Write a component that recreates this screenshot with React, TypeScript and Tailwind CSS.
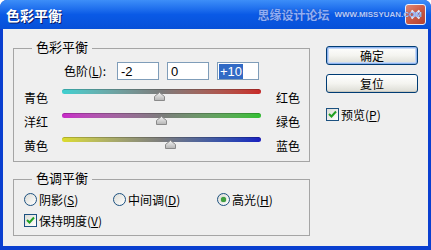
import React from "react";

const cjk = "font-['SimSun','Noto_Sans_CJK_SC',sans-serif]";

function Thumb({ left }: { left: string }) {
  return (
    <svg className={`absolute top-[2px] ${left}`} width="11" height="9" viewBox="0 0 11 9">
      <defs>
        <linearGradient id="tg" x1="0" y1="0" x2="0" y2="1">
          <stop offset="0" stopColor="#f4f4f4" />
          <stop offset="1" stopColor="#b4b4b4" />
        </linearGradient>
      </defs>
      <path d="M5.5 0.5 L10.5 4.5 L10.5 8.5 L0.5 8.5 L0.5 4.5 Z" fill="url(#tg)" stroke="#8a8a8a" />
    </svg>
  );
}

function SliderRow({ l, r, grad, left }: { l: string; r: string; grad: string; left: string }) {
  return (
    <div className="flex h-[24px] items-center">
      <span className="w-[48px] pl-[10px] pt-[5px] text-[12px] leading-none">{l}</span>
      <div className="relative h-[10px] w-[199px]">
        <div className={`absolute left-0 right-0 top-[-1px] h-[5px] rounded-full ${grad} border-t border-[#00000030]`} />
        <Thumb left={left} />
      </div>
      <span className="ml-[15px] pt-[5px] text-[12px] leading-none">{r}</span>
    </div>
  );
}

function U({ c }: { c: string }) {
  return <span className="underline underline-offset-[1px]">{c}</span>;
}

function Radio({ checked }: { checked?: boolean }) {
  return (
    <span className="relative flex h-[13px] w-[13px] items-center justify-center rounded-full border border-[#1c5180] bg-linear-to-br from-[#dcdcd6] to-white">
      {checked && <span className="h-[5px] w-[5px] rounded-full bg-[#3fa03f] shadow-[0_0_1px_#1f7a1f]" />}
    </span>
  );
}

function Check() {
  return (
    <span className="flex h-[13px] w-[13px] items-center justify-center border border-[#1c5180] bg-linear-to-br from-[#dcdcd6] to-white">
      <svg width="9" height="9" viewBox="0 0 9 9">
        <path d="M1 4 L3.5 6.5 L8 1.5" fill="none" stroke="#21a121" strokeWidth="2" />
      </svg>
    </span>
  );
}

function Button({ label, def }: { label: string; def?: boolean }) {
  return (
    <div
      className={`flex h-[19px] w-[92px] items-center justify-center rounded-[3px] border border-[#003c74] bg-linear-to-b from-white via-[#f4f4f0] to-[#dcdcd4] text-[12px] leading-none ${
        def ? "shadow-[inset_0_0_0_1px_#8fb3ef,inset_0_0_0_2px_#c5d8f5]" : "shadow-[inset_0_-1px_0_#c8c8c0]"
      }`}
    >
      {label}
    </div>
  );
}

export default function App() {
  return (
    <div className={`flex h-[250px] w-[431px] flex-col overflow-hidden rounded-t-[7px] bg-[#0a3fd0] ${cjk} text-black`}>
      {/* Title bar */}
      <div className="relative flex h-[29px] shrink-0 items-center bg-linear-to-b from-[#3d8ef8] via-[#0a5ae6] to-[#0750d8] pl-[6px] pr-[9px]">
        <span className="text-[14px] font-bold leading-none text-white [text-shadow:1px_1px_0_#0a1d6a]">色彩平衡</span>
        <div className="absolute right-[5px] top-[4px] flex h-[21px] w-[21px] items-center justify-center rounded-[3px] border border-white bg-linear-to-br from-[#f08a6a] via-[#e05a34] to-[#c8401c] opacity-90">
          <svg width="11" height="11" viewBox="0 0 11 11">
            <path d="M1.5 1.5 L9.5 9.5 M9.5 1.5 L1.5 9.5" stroke="white" strokeWidth="2.2" />
          </svg>
        </div>
        <div className="relative z-10 ml-auto flex items-center whitespace-nowrap">
          <span className="text-[12px] font-bold leading-none text-[#90aef5] [text-shadow:0_0_1px_#1a3d9a]">思缘设计论坛</span>
          <span className="ml-[5px] font-['Liberation_Sans',sans-serif] text-[8px] font-bold leading-none text-[#b4ccff] [text-shadow:0_0_1px_#1a3d9a]">WWW.MISSYUAN.COM</span>
        </div>
      </div>

      {/* Body */}
      <div className="mx-[3px] mb-[4px] flex flex-1 bg-[#efefef] pl-[10px]">
        {/* Left column */}
        <div className="mt-[19px] flex w-[297px] flex-col">
          {/* Group 1 */}
          <div className="relative h-[114px] border border-[#a5a5a5]">
            <span className="absolute left-[18px] top-[-9px] bg-[#efefef] px-[4px] text-[13px] leading-none">色彩平衡</span>
            <div className="flex h-[31px] items-end">
              <span className="ml-[50px] w-[53px] pb-[3px] text-[12px] leading-none">
                色阶(<U c="L" />):
              </span>
              <div className="flex h-[18px] w-[42px] items-center border border-[#7f9db9] bg-white pl-[3px] font-['Liberation_Sans',sans-serif] text-[13px] leading-none">-2</div>
              <div className="ml-[8px] flex h-[18px] w-[42px] items-center border border-[#7f9db9] bg-white pl-[3px] font-['Liberation_Sans',sans-serif] text-[13px] leading-none">0</div>
              <div className="ml-[8px] flex h-[18px] w-[42px] items-center border border-[#7f9db9] bg-white pl-[1px] font-['Liberation_Sans',sans-serif] text-[13px] leading-none">
                <span className="bg-[#316ac5] px-[1px] py-[1px] text-white">+10</span>
              </div>
            </div>
            <div className="mt-[3px] flex flex-col">
              <SliderRow l="青色" r="红色" grad="bg-linear-to-r from-[#3cd0d0] via-[#7c7c7c] to-[#c82828]" left="left-[92px]" />
              <SliderRow l="洋红" r="绿色" grad="bg-linear-to-r from-[#c828c8] via-[#7c7c7c] to-[#30c030]" left="left-[94px]" />
              <SliderRow l="黄色" r="蓝色" grad="bg-linear-to-r from-[#dcdc28] via-[#7c7c7c] to-[#1c1cc0]" left="left-[103px]" />
            </div>
          </div>

          {/* Group 2 */}
          <div className="relative mt-[17px] h-[57px] border border-[#a5a5a5]">
            <span className="absolute left-[18px] top-[-9px] bg-[#efefef] px-[4px] text-[13px] leading-none">色调平衡</span>
            <div className="flex pl-[10px] pt-[13px] text-[12px] leading-none">
              <div className="flex w-[89px] items-center gap-[2px]">
                <Radio />
                <span>阴影(<U c="S" />)</span>
              </div>
              <div className="flex w-[104px] items-center gap-[2px]">
                <Radio />
                <span>中间调(<U c="D" />)</span>
              </div>
              <div className="flex items-center gap-[2px]">
                <Radio checked />
                <span>高光(<U c="H" />)</span>
              </div>
            </div>
            <div className="mt-[8px] flex items-center gap-[2px] pl-[10px] text-[12px] leading-none">
              <Check />
              <span>保持明度(<U c="V" />)</span>
            </div>
          </div>
        </div>

        {/* Right column */}
        <div className="ml-[16px] flex flex-col pt-[17px]">
          <Button label="确定" def />
          <div className="mt-[9px]">
            <Button label="复位" />
          </div>
          <div className="mt-[15px] flex items-center gap-[2px] text-[12px] leading-none">
            <Check />
            <span>预览(<U c="P" />)</span>
          </div>
        </div>
      </div>
    </div>
  );
}
